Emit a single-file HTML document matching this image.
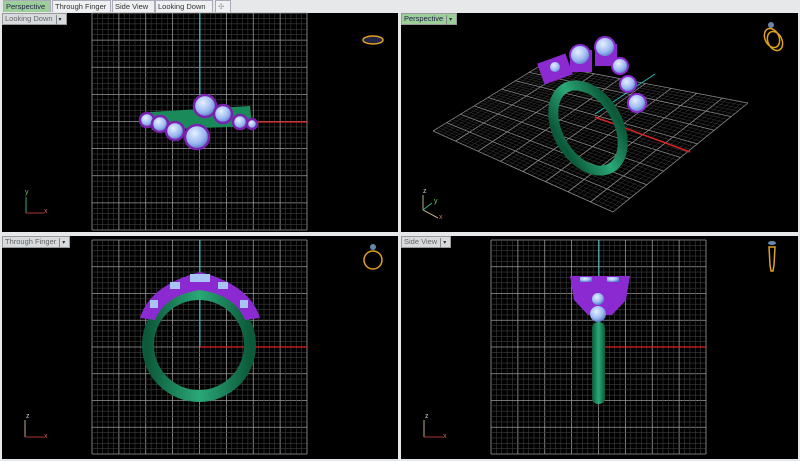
<!DOCTYPE html>
<html><head><meta charset="utf-8"><style>
*{margin:0;padding:0}
body{width:800px;height:461px;background:#e6e8ea;position:relative;overflow:hidden;font-family:"Liberation Sans",sans-serif}
.tab{position:absolute;top:0;height:12px;font-size:7.5px;line-height:12px;padding:0 2px;color:#333;background:#eef0f2;border:1px solid #aab;border-bottom:none;white-space:nowrap;overflow:hidden;box-sizing:border-box}
.vp{position:absolute;background:#000}
.lbl{position:absolute;font-size:7.5px;line-height:10px;height:10px;padding:0 2px;color:#666;background:#d8dbde;border:1px solid #999;white-space:nowrap}
.lbl span{display:inline-block;width:7px;border-left:1px solid #888;margin-left:3px;text-align:center;color:#333;font-size:6px}
svg{position:absolute;left:0;top:0}
</style></head><body>
<div class="tab" style="left:3px;width:48px;background:#9dcf9a;color:#224">Perspective</div>
<div class="tab" style="left:52px;width:59px">Through Finger</div>
<div class="tab" style="left:112px;width:43px">Side View</div>
<div class="tab" style="left:155px;width:58px">Looking Down</div>
<div class="tab" style="left:215px;width:16px;color:#999">✣</div>
<div class="vp" style="left:2px;top:13px;width:396px;height:219px"></div>
<div class="vp" style="left:401px;top:13px;width:397px;height:219px"></div>
<div class="vp" style="left:2px;top:236px;width:396px;height:223px"></div>
<div class="vp" style="left:401px;top:236px;width:397px;height:223px"></div>
<svg id="s" width="800" height="461" xmlns="http://www.w3.org/2000/svg">
<defs>
<radialGradient id="gem" cx="0.4" cy="0.35" r="0.7"><stop offset="0" stop-color="#e6f0ff"/><stop offset="0.6" stop-color="#9ab8f0"/><stop offset="1" stop-color="#5070c0"/></radialGradient>
<linearGradient id="grn" x1="0" x2="1"><stop offset="0" stop-color="#0c5a3a"/><stop offset="0.5" stop-color="#2aa878"/><stop offset="1" stop-color="#0c5a3a"/></linearGradient>
</defs>
<g id="grids"></g>
<line x1="200" y1="13" x2="200" y2="122" stroke="#2bb" stroke-width="1"/>
<line x1="200" y1="122" x2="307" y2="122" stroke="#d22" stroke-width="1.2"/>
<line x1="200" y1="240" x2="200" y2="347" stroke="#2bb"/>
<line x1="200" y1="347" x2="307" y2="347" stroke="#d22" stroke-width="1.2"/>
<line x1="599" y1="240" x2="599" y2="347" stroke="#2bb"/>
<line x1="599" y1="347" x2="706" y2="347" stroke="#d22" stroke-width="1.2"/>
<line x1="595" y1="114" x2="655" y2="74" stroke="#2bb"/>
<line x1="595" y1="117" x2="690" y2="152" stroke="#d22" stroke-width="1.5"/>
<path d="M150 112 L250 106 L252 126 L152 130Z" fill="#1a8a5a"/>
<g fill="url(#gem)" stroke="#7a22b0" stroke-width="2.5">
<circle cx="147" cy="120" r="7"/><circle cx="160" cy="124" r="8"/><circle cx="175" cy="131" r="9"/>
<circle cx="197" cy="137" r="12"/><circle cx="205" cy="106" r="11"/><circle cx="223" cy="114" r="9"/>
<circle cx="240" cy="122" r="7"/><circle cx="252" cy="124" r="5"/></g>
<ellipse cx="588" cy="128" rx="30" ry="46" transform="rotate(-30 588 128)" fill="none" stroke="url(#grn)" stroke-width="10"/>
<g fill="#8a2ad0"><rect x="540" y="58" width="30" height="22" transform="rotate(-20 555 69)"/><rect x="570" y="50" width="22" height="22"/><rect x="595" y="44" width="22" height="22"/></g>
<g fill="url(#gem)" stroke="#8a2ad0" stroke-width="2">
<circle cx="555" cy="67" r="6"/><circle cx="580" cy="55" r="10"/><circle cx="605" cy="47" r="10"/><circle cx="620" cy="66" r="8"/><circle cx="628" cy="84" r="8"/><circle cx="637" cy="103" r="9"/></g>
<circle cx="199" cy="345" r="51" fill="none" stroke="url(#grn)" stroke-width="12"/>
<path d="M140 318 Q150 285 200 272 Q250 285 260 318 L245 320 Q235 295 200 290 Q165 295 155 320Z" fill="#8a2ad0"/>
<g fill="#a8c4f4"><rect x="190" y="274" width="20" height="8"/><rect x="170" y="282" width="10" height="7"/><rect x="218" y="282" width="10" height="7"/><rect x="150" y="300" width="8" height="8"/><rect x="240" y="300" width="8" height="8"/></g>
<rect x="592" y="322" width="13" height="82" rx="6" fill="url(#grn)"/>
<path d="M570 276 L630 276 L626 300 L612 315 L588 315 L574 300Z" fill="#8a2ad0"/>
<g fill="url(#gem)"><circle cx="598" cy="314" r="8"/><circle cx="598" cy="299" r="6"/><rect x="580" y="277" width="12" height="5"/><rect x="607" y="277" width="12" height="5"/></g>
<ellipse cx="373" cy="40" rx="10" ry="4" fill="#224" stroke="#e0a020" stroke-width="1.5"/>
<g fill="none" stroke="#e0a020" stroke-width="1.5"><ellipse cx="772" cy="38" rx="7" ry="10" transform="rotate(-25 772 38)"/><ellipse cx="775" cy="41" rx="7" ry="10" transform="rotate(-25 775 41)"/></g>
<circle cx="771" cy="25" r="3" fill="#68a"/>
<circle cx="373" cy="260" r="9" fill="none" stroke="#e0a020" stroke-width="1.5"/><circle cx="373" cy="247" r="3" fill="#68a"/>
<path d="M769 247 L775 247 L774 265 L773 271 L771 271 L770 265Z" fill="none" stroke="#e0a020" stroke-width="1.5"/><ellipse cx="772" cy="243" rx="4" ry="2" fill="#68a"/>
<g stroke-width="1" font-size="7" font-family="Liberation Sans">
<path d="M26 197 V213" stroke="#3a8"/><path d="M26 213 H44" stroke="#a33"/><text x="25" y="194" fill="#6c6">y</text><text x="44" y="213" fill="#c66">x</text>
<path d="M25 420 V437" stroke="#ba8"/><path d="M25 437 H44" stroke="#a33"/><text x="26" y="418" fill="#ccc">z</text><text x="44" y="438" fill="#c66">x</text>
<path d="M424 420 V437" stroke="#ba8"/><path d="M424 437 H443" stroke="#a33"/><text x="425" y="418" fill="#ccc">z</text><text x="443" y="438" fill="#c66">x</text>
<path d="M423 195 V210 L438 218" stroke="#ba8" fill="none"/><path d="M423 210 L432 203" stroke="#3a8"/><text x="423" y="193" fill="#ccc">z</text><text x="434" y="203" fill="#6c6">y</text><text x="439" y="219" fill="#c66">x</text>
</g>
</svg>
<div class="lbl" style="left:2px;top:13px">Looking Down<span>▾</span></div>
<div class="lbl" style="left:401px;top:13px;background:#9dcf9a;color:#224">Perspective<span>▾</span></div>
<div class="lbl" style="left:2px;top:236px">Through Finger<span>▾</span></div>
<div class="lbl" style="left:401px;top:236px">Side View<span>▾</span></div>
<script>
var g=document.getElementById('grids'),h='';
function L(a,b,c,d,col,w){h+='<line x1="'+a+'" y1="'+b+'" x2="'+c+'" y2="'+d+'" stroke="'+col+'" stroke-width="'+w+'"/>';}
function flat(x0,y0,x1,y1){var n=40;for(var i=0;i<=n;i++){var m=i%5==0;var c=m?'#9a9a9a':'#3c3c3c';var x=x0+(x1-x0)*i/n,y=y0+(y1-y0)*i/n;L(x,y0,x,y1,c,m?0.8:0.6);L(x0,y,x1,y,c,m?0.8:0.6);}}
flat(92,13,307,230);flat(92,240,307,454);flat(491,240,706,454);
var P=[[433,131],[543,64],[748,103],[613,212]];
function bl(u,v){var a=P[0],b=P[1],c=P[2],d=P[3];return[(1-u)*(1-v)*a[0]+u*(1-v)*b[0]+u*v*c[0]+(1-u)*v*d[0],(1-u)*(1-v)*a[1]+u*(1-v)*b[1]+u*v*c[1]+(1-u)*v*d[1]];}
for(var i=0;i<=40;i++){var t=i/40,m=i%5==0,c=m?'#8a8a8a':'#3a3a3a';var p=bl(t,0),q=bl(t,1);L(p[0],p[1],q[0],q[1],c,m?0.8:0.5);p=bl(0,t);q=bl(1,t);L(p[0],p[1],q[0],q[1],c,m?0.8:0.5);}
g.innerHTML=h;
</script>
</body></html>
